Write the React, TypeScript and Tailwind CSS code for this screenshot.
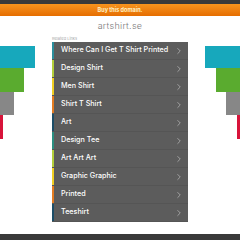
import { ChevronRight } from 'lucide-react';

const links = [
  { label: 'Where Can I Get T Shirt Printed', stripe: 'bg-[#2a8e9c]' },
  { label: 'Design Shirt', stripe: 'bg-[#b3cf3a]' },
  { label: 'Men Shirt', stripe: 'bg-[#f0cf22]' },
  { label: 'Shirt T Shirt', stripe: 'bg-[#e37c22]' },
  { label: 'Art', stripe: 'bg-[#1d4e68]' },
  { label: 'Design Tee', stripe: 'bg-[#2a8e80]' },
  { label: 'Art Art Art', stripe: 'bg-[#b3cf3a]' },
  { label: 'Graphic Graphic', stripe: 'bg-[#f0cf22]' },
  { label: 'Printed', stripe: 'bg-[#e37c22]' },
  { label: 'Teeshirt', stripe: 'bg-[#1d4e68]' },
];

export default function App() {
  return (
    <div className="flex h-[240px] w-[240px] flex-col overflow-hidden bg-white font-['Inter',sans-serif]">
      <div className="h-[4px] bg-[#3a3a3a]" />
      <div className="flex h-[12px] items-center justify-center bg-gradient-to-b from-[#f7941d] to-[#e56d00]">
        <span className="text-[5.5px] font-bold text-[#fff2c4]">Buy this domain.</span>
      </div>

      <div className="flex h-[19px] items-center justify-center pt-[1px]">
        <span className="text-[9px] font-light tracking-[0.3px] text-[#7a7a7a]">artshirt.se</span>
      </div>

      <div className="grid flex-1 grid-cols-[52px_136px_52px]">
        <div className="flex flex-col pt-[11px]">
          <div className="h-[22px] w-[35px] bg-[#17a8bc]" />
          <div className="h-[24px] w-[24px] bg-[#5aab2f]" />
          <div className="h-[23px] w-[14px] bg-[#878787]" />
          <div className="h-[24px] w-[3px] bg-[#d8143a]" />
        </div>

        <div className="flex flex-col">
          <div className="h-[7px] text-[4px] leading-[7px] text-[#a8a8a8]">Related Links</div>
          <div className="flex flex-col bg-[#5c5c5c]">
            {links.map((link) => (
              <div key={link.label} className="flex h-[18px] items-stretch border-b border-[#555]">
                <div className={`w-[2px] ${link.stripe}`} />
                <div className="flex flex-1 items-center justify-between pl-[7px] pr-[4px]">
                  <span className="text-[7.2px] font-medium text-white">{link.label}</span>
                  <ChevronRight className="h-[10px] w-[10px] text-[#d0d0d0]" strokeWidth={1.4} />
                </div>
              </div>
            ))}
          </div>
        </div>

        <div className="flex flex-col items-end pt-[11px]">
          <div className="h-[22px] w-[35px] bg-[#17a8bc]" />
          <div className="h-[24px] w-[24px] bg-[#5aab2f]" />
          <div className="h-[23px] w-[14px] bg-[#878787]" />
          <div className="h-[24px] w-[3px] bg-[#d8143a]" />
        </div>
      </div>

      <div className="h-[6px] bg-[#3a3a3a]" />
    </div>
  );
}
